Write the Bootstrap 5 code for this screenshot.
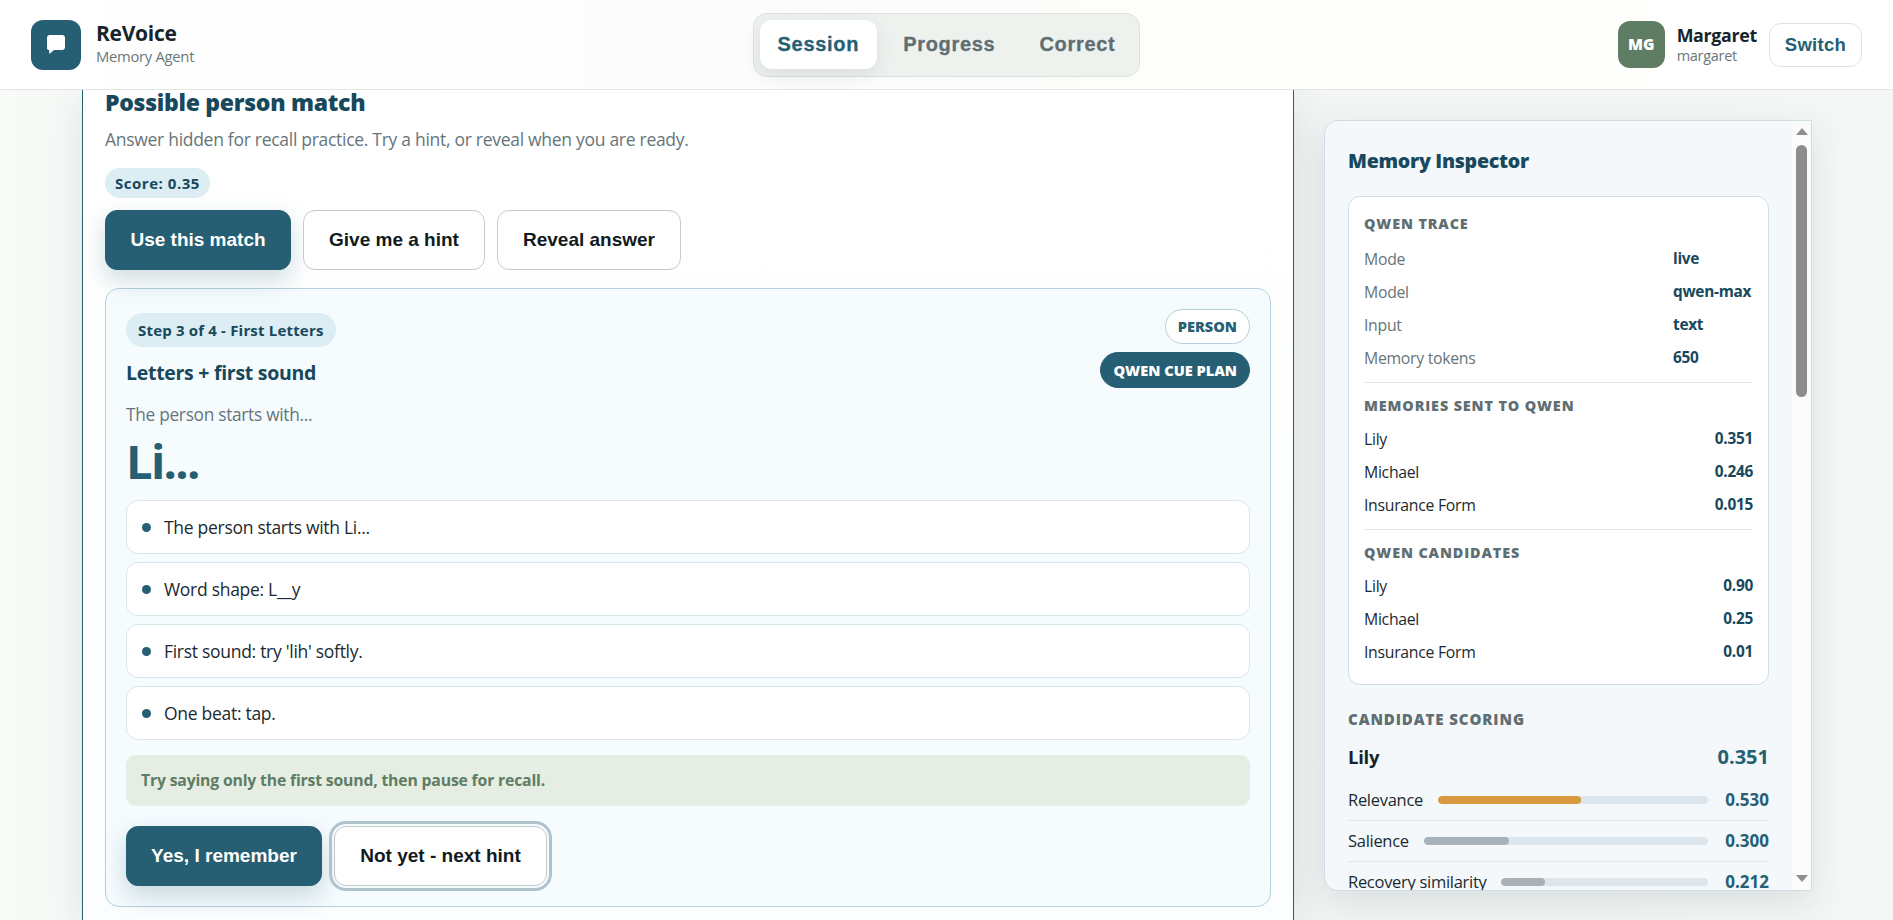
<!DOCTYPE html>
<html lang="en">
<head>
  <meta charset="UTF-8">
  <meta name="viewport" content="width=device-width,initial-scale=1">
  <title>ReVoice - Memory Agent</title>
  <link rel="stylesheet" href="https://cdn.jsdelivr.net/npm/bootstrap@5.3.2/dist/css/bootstrap.min.css">
  <style>
    html, body { height:100%; }
    body { background:linear-gradient(90deg,#f8faf7,#f2f5f4 60%,#f4f7f5); font-family:"Open Sans","Noto Sans",sans-serif; letter-spacing:-.018em; color:#1b2a31; overflow:hidden; display:flex; flex-direction:column; }
    .top-bar { height:90px; flex:none; background:linear-gradient(90deg,#fff,#fbfcfb 40%,#fefefc 70%,#fff); border-bottom:1px solid #e2e5e1; padding:0 31px; position:relative; z-index:5; display:grid; grid-template-columns:1fr auto 1fr; align-items:center; }
    .logo-box { width:50px; height:50px; border-radius:12px; background:#265f73; margin-right:15px; }
    .brand-name { font-size:21px; font-weight:700; line-height:24px; color:#17242b; margin-top:-3px; }
    .brand-sub { font-size:14.8px; line-height:20px; color:#6a777c; margin-top:1px; }
    .tab-wrap { background:#eef2ef; border:1px solid #dde2de; border-radius:14px; padding:6px; gap:8px; height:64px; }
    .tab-wrap .nav-link { font-family:"Liberation Sans",Arial,sans-serif; font-weight:700; font-size:20px; letter-spacing:.7px; -webkit-text-stroke:.3px; height:49px; line-height:49px; padding:0 18px; border-radius:12px; color:#5f6e72; }
    .tab-wrap .nav-link.active { background:#fff; color:#265f73; box-shadow:0 6px 18px rgba(38,60,70,.1); }
    .who-avatar { width:47px; height:47px; border-radius:12px; background:#5f7d63; color:#fff; font-weight:800; font-size:15.5px; letter-spacing:0; margin-right:12px; }
    .who-name { font-size:17.8px; font-weight:700; line-height:21px; color:#17242b; margin-top:-1px; }
    .who-sub { font-size:14.5px; line-height:17px; color:#6a777c; margin-top:1px; }
    .switch-btn { width:93px; height:44px; padding:0; margin-left:12px; font-family:"Liberation Sans",Arial,sans-serif; font-weight:700; font-size:18.5px; letter-spacing:.3px; color:#265f73; background:#fff; border:1px solid #dfe3dc; border-radius:12px; }
    .page-body { flex:1; min-height:0; padding:0 81px 0 82px; gap:30px; }
    .main-panel { flex:1; min-width:0; background:linear-gradient(180deg,#fff,#fbfdfe); border:1px solid #265f73; border-top:0; border-bottom:0; padding:0 22px; box-shadow:0 10px 40px rgba(30,60,70,.12); }
    .panel-title { font-size:23px; font-weight:800; line-height:26px; color:#17485c; margin:-1px 0 0; }
    .panel-text { font-size:17.5px; line-height:22px; color:#66757a; margin:13px 0 0; }
    .score-pill { background:#dcedf3; color:#17485c; font-size:15px; font-weight:700; height:30px; line-height:30px; padding:0 10px; border-radius:15px; margin-top:18px; letter-spacing:.035em; }
    .act-row { gap:12px; margin-top:12px; }
    .act-row.act-last { margin-top:20px; }
    .act-btn { height:60px; padding:0; font-family:"Liberation Sans",Arial,sans-serif; font-weight:700; font-size:19px; letter-spacing:0; border-radius:12px; }
    .act-main { background:#265f73; border:1px solid #265f73; color:#fff; box-shadow:0 10px 24px rgba(38,95,115,.22); }
    .act-plain { background:#fff; border:1px solid #c4cbc9; color:#101a20; }
    .act-ring { outline:3px solid #aec3cd; outline-offset:2px; }
    .step-box { margin-top:18px; background:#f6fbfe; border:1px solid #b5d0dc; border-radius:14px; padding:20px; }
    .step-pill { background:#dcedf3; color:#17485c; font-size:15px; font-weight:700; height:34px; line-height:34px; padding:0 12px; border-radius:17px; margin-top:4px; letter-spacing:.012em; }
    .step-title { font-size:19.5px; font-weight:700; line-height:24px; color:#17485c; margin:14px 0 0; }
    .type-pill { height:35px; line-height:33px; padding:0 12px; border-radius:18px; font-size:14.6px; font-weight:800; letter-spacing:0; background:#fff; border:1px solid #b5d0dc; color:#265f73; }
    .type-pill.filled { height:36px; line-height:34px; background:#265f73; border-color:#265f73; color:#fff; }
    .cue-lead { font-size:17.3px; line-height:22px; color:#66757a; margin:16px 0 0; }
    .cue-big { font-size:47px; font-weight:700; line-height:52px; letter-spacing:-.035em; color:#265f73; margin:9px 0 13px; }
    .cue-list { gap:8px; }
    .cue-list .list-group-item { height:54px; border:1px solid #d8e7ee; border-radius:12px; background:#fff; padding:0 15px; font-size:17.5px; color:#1b2a31; }
    .cue-dot { width:9px; height:9px; border-radius:50%; background:#265f73; margin-right:13px; flex:none; }
    .cue-hint { margin-top:15px; height:51px; line-height:51px; background:#e6eee3; color:#5f7d63; font-size:15.8px; font-weight:700; border-radius:10px; padding:0 15px; letter-spacing:-.012em; }
    .inspector { width:488px; flex:none; height:771px; margin-top:30px; background:#f4f8fa; border:1px solid #cfdde5; border-radius:14px 0 0 14px; box-shadow:0 12px 36px rgba(30,60,70,.12); overflow:hidden; }
    .insp-scroll { flex:1; min-width:0; padding:28px 23px 0; overflow:hidden; }
    .insp-title { font-size:19.6px; font-weight:800; line-height:24px; color:#17485c; margin:0 0 23px; }
    .trace-card { background:#fff; border:1px solid #cfdde5; border-radius:12px; padding:16px 15px 21px; }
    .sect-head { font-size:14.4px; font-weight:800; line-height:22px; color:#5f6e72; letter-spacing:.06em; text-transform:uppercase; margin:0 0 11px; }
    .sect-head.first { margin-bottom:13px; }
    .trace-row { height:22px; line-height:22px; font-size:15.8px; margin-bottom:11px; }
    .trace-row:last-of-type { margin-bottom:0; }
    .trace-row .t-val { font-size:15.4px; font-weight:700; color:#17485c; white-space:nowrap; }
    .trace-key { color:#66757a; }
    .fixed-val { width:80px; }
    .trace-line { margin:13px 0 12px; border-top:1px solid #dfe8ed; opacity:1; }
    .score-head { font-size:15px; margin:23px 0 14px; }
    .score-top { height:26px; line-height:26px; margin-bottom:10px; }
    .score-name { font-size:18.5px; font-weight:700; color:#17242b; }
    .score-num { font-size:20px; font-weight:700; color:#265f73; letter-spacing:0; }
    .score-row { height:41px; border-bottom:1px solid #dfe8ed; gap:15px; font-size:16.5px; white-space:nowrap; }
    .score-row .progress { flex:1; height:8px; background:#dce6ec; border-radius:4px; }
    .score-row .progress-bar { background:#a8b2b8; border-radius:4px; }
    .score-row .progress-bar.hot { background:#d99a3f; }
    .score-val { width:46px; text-align:right; font-size:17px; font-weight:700; color:#265f73; letter-spacing:0; }
    .fake-track { width:19px; flex:none; background:#fbfbfb; padding-top:7px; }
    .arrow-up { width:0; height:0; border:6px solid transparent; border-top:0; border-bottom:7px solid #8f8f8f; }
    .arrow-down { width:0; height:0; border:6px solid transparent; border-bottom:0; border-top:7px solid #8f8f8f; margin-top:auto; margin-bottom:8px; }
    .fake-thumb { width:11px; height:252px; background:#8c8c8c; border-radius:6px; margin-top:10px; }
  </style>
</head>
<body>
  <header class="top-bar">
    <div class="d-flex align-items-center">
      <div class="logo-box d-flex align-items-center justify-content-center">
        <svg width="20" height="21" viewBox="0 0 20 21"><path fill="#fff" d="M4 1h12a3 3 0 0 1 3 3v9a3 3 0 0 1-3 3H8l-4.500 4L3 16a2.500 2.500 0 0 1-2-3V4a3 3 0 0 1 3-3z"/></svg>
      </div>
      <div>
        <div class="brand-name">ReVoice</div>
        <div class="brand-sub">Memory Agent</div>
      </div>
    </div>
    <ul class="nav tab-wrap flex-nowrap">
      <li class="nav-item"><a class="nav-link active" href="#">Session</a></li>
      <li class="nav-item"><a class="nav-link" href="#">Progress</a></li>
      <li class="nav-item"><a class="nav-link" href="#">Correct</a></li>
    </ul>
    <div class="d-flex align-items-center justify-content-end">
      <div class="who-avatar d-flex align-items-center justify-content-center">MG</div>
      <div>
        <div class="who-name">Margaret</div>
        <div class="who-sub">margaret</div>
      </div>
      <button class="btn switch-btn">Switch</button>
    </div>
  </header>

  <main class="page-body d-flex">
    <section class="main-panel">
      <h2 class="panel-title">Possible person match</h2>
      <p class="panel-text">Answer hidden for recall practice. Try a hint, or reveal when you are ready.</p>
      <span class="badge score-pill d-inline-block">Score: 0.35</span>
      <div class="d-flex act-row">
        <button class="btn act-btn act-main" style="width:186px">Use this match</button>
        <button class="btn act-btn act-plain" style="width:182px">Give me a hint</button>
        <button class="btn act-btn act-plain" style="width:184px">Reveal answer</button>
      </div>

      <div class="step-box">
        <div class="d-flex justify-content-between align-items-start">
          <div>
            <span class="badge step-pill d-inline-block">Step 3 of 4 - First Letters</span>
            <h3 class="step-title">Letters + first sound</h3>
          </div>
          <div class="d-flex flex-column align-items-end gap-2">
            <span class="type-pill">PERSON</span>
            <span class="type-pill filled">QWEN CUE PLAN</span>
          </div>
        </div>
        <p class="cue-lead">The person starts with...</p>
        <div class="cue-big">Li...</div>
        <ul class="list-group cue-list">
          <li class="list-group-item d-flex align-items-center"><span class="cue-dot"></span>The person starts with Li...</li>
          <li class="list-group-item d-flex align-items-center"><span class="cue-dot"></span>Word shape: L__y</li>
          <li class="list-group-item d-flex align-items-center"><span class="cue-dot"></span>First sound: try 'lih' softly.</li>
          <li class="list-group-item d-flex align-items-center"><span class="cue-dot"></span>One beat: tap.</li>
        </ul>
        <div class="cue-hint">Try saying only the first sound, then pause for recall.</div>
        <div class="d-flex act-row act-last">
          <button class="btn act-btn act-main" style="width:196px">Yes, I remember</button>
          <button class="btn act-btn act-plain act-ring" style="width:213px">Not yet - next hint</button>
        </div>
      </div>
    </section>

    <aside class="inspector d-flex">
      <div class="insp-scroll">
        <h2 class="insp-title">Memory Inspector</h2>
        <div class="trace-card">
          <div class="sect-head first">Qwen Trace</div>
          <div class="d-flex justify-content-between trace-row"><span class="trace-key">Mode</span><span class="t-val fixed-val">live</span></div>
          <div class="d-flex justify-content-between trace-row"><span class="trace-key">Model</span><span class="t-val fixed-val">qwen-max</span></div>
          <div class="d-flex justify-content-between trace-row"><span class="trace-key">Input</span><span class="t-val fixed-val">text</span></div>
          <div class="d-flex justify-content-between trace-row"><span class="trace-key">Memory tokens</span><span class="t-val fixed-val">650</span></div>
          <hr class="trace-line">
          <div class="sect-head">Memories sent to Qwen</div>
          <div class="d-flex justify-content-between trace-row"><span>Lily</span><span class="t-val">0.351</span></div>
          <div class="d-flex justify-content-between trace-row"><span>Michael</span><span class="t-val">0.246</span></div>
          <div class="d-flex justify-content-between trace-row"><span>Insurance Form</span><span class="t-val">0.015</span></div>
          <hr class="trace-line">
          <div class="sect-head">Qwen Candidates</div>
          <div class="d-flex justify-content-between trace-row"><span>Lily</span><span class="t-val">0.90</span></div>
          <div class="d-flex justify-content-between trace-row"><span>Michael</span><span class="t-val">0.25</span></div>
          <div class="d-flex justify-content-between trace-row"><span>Insurance Form</span><span class="t-val">0.01</span></div>
        </div>
        <div class="sect-head score-head">Candidate Scoring</div>
        <div class="d-flex justify-content-between score-top"><span class="score-name">Lily</span><span class="score-num">0.351</span></div>
        <div class="d-flex align-items-center score-row"><span>Relevance</span><div class="progress"><div class="progress-bar hot" style="width:53%"></div></div><span class="score-val">0.530</span></div>
        <div class="d-flex align-items-center score-row"><span>Salience</span><div class="progress"><div class="progress-bar" style="width:30%"></div></div><span class="score-val">0.300</span></div>
        <div class="d-flex align-items-center score-row"><span>Recovery similarity</span><div class="progress"><div class="progress-bar" style="width:21.2%"></div></div><span class="score-val">0.212</span></div>
      </div>
      <div class="fake-track d-flex flex-column align-items-center">
        <div class="arrow-up"></div>
        <div class="fake-thumb"></div>
        <div class="arrow-down"></div>
      </div>
    </aside>
  </main>
<script src="https://cdn.jsdelivr.net/npm/bootstrap@5.3.2/dist/js/bootstrap.bundle.min.js"></script>
</body>
</html>
